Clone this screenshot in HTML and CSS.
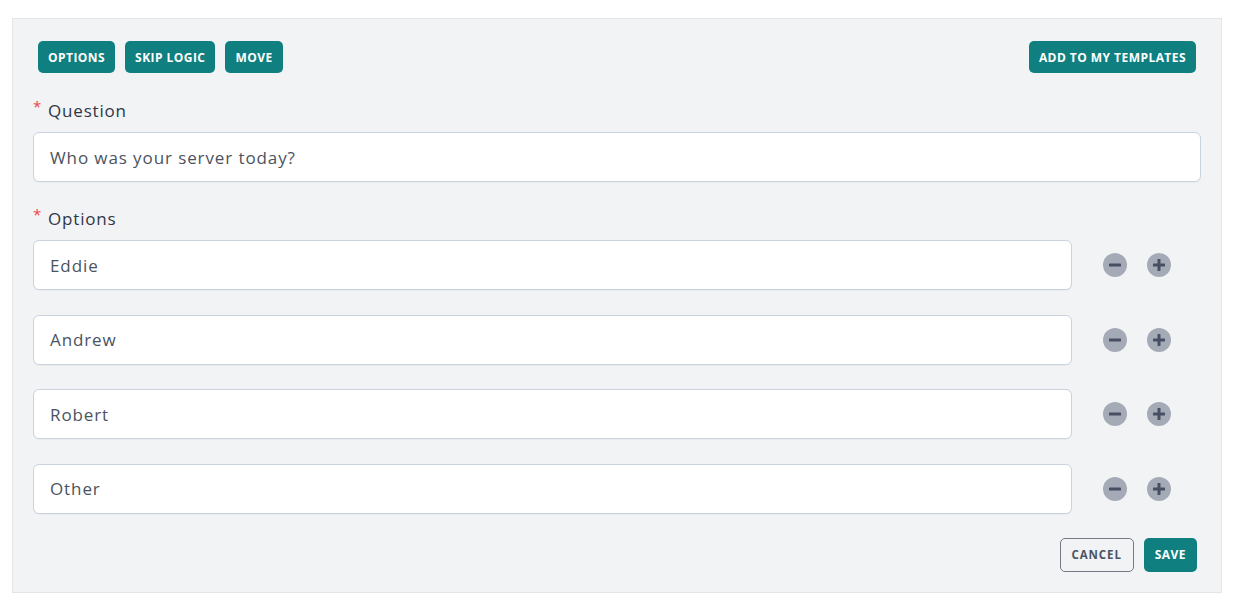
FILE: index.html
```html
<!DOCTYPE html>
<html>
<head>
<meta charset="utf-8">
<link rel="stylesheet" href="styles.css">
</head>
<body>
<div class="panel">
  <div class="toolbar">
    <div class="toolbar-left">
      <button class="btn btn-teal">OPTIONS</button>
      <button class="btn btn-teal">SKIP LOGIC</button>
      <button class="btn btn-teal">MOVE</button>
    </div>
    <button class="btn btn-teal">ADD TO MY TEMPLATES</button>
  </div>

  <label class="field-label label-question"><span class="req">*</span>Question</label>
  <div class="input">Who was your server today?</div>

  <label class="field-label label-options"><span class="req">*</span>Options</label>
  <div class="options">
    <div class="option-row">
      <div class="input">Eddie</div>
      <div class="icons">
        <span class="circle"><svg viewBox="0 0 24 24" width="24" height="24"><rect x="6" y="10.5" width="12" height="3" rx="0.6"/></svg></span>
        <span class="circle"><svg viewBox="0 0 24 24" width="24" height="24"><rect x="6" y="10.5" width="12" height="3" rx="0.6"/><rect x="10.5" y="6" width="3" height="12" rx="0.6"/></svg></span>
      </div>
    </div>
    <div class="option-row">
      <div class="input">Andrew</div>
      <div class="icons">
        <span class="circle"><svg viewBox="0 0 24 24" width="24" height="24"><rect x="6" y="10.5" width="12" height="3" rx="0.6"/></svg></span>
        <span class="circle"><svg viewBox="0 0 24 24" width="24" height="24"><rect x="6" y="10.5" width="12" height="3" rx="0.6"/><rect x="10.5" y="6" width="3" height="12" rx="0.6"/></svg></span>
      </div>
    </div>
    <div class="option-row">
      <div class="input">Robert</div>
      <div class="icons">
        <span class="circle"><svg viewBox="0 0 24 24" width="24" height="24"><rect x="6" y="10.5" width="12" height="3" rx="0.6"/></svg></span>
        <span class="circle"><svg viewBox="0 0 24 24" width="24" height="24"><rect x="6" y="10.5" width="12" height="3" rx="0.6"/><rect x="10.5" y="6" width="3" height="12" rx="0.6"/></svg></span>
      </div>
    </div>
    <div class="option-row">
      <div class="input">Other</div>
      <div class="icons">
        <span class="circle"><svg viewBox="0 0 24 24" width="24" height="24"><rect x="6" y="10.5" width="12" height="3" rx="0.6"/></svg></span>
        <span class="circle"><svg viewBox="0 0 24 24" width="24" height="24"><rect x="6" y="10.5" width="12" height="3" rx="0.6"/><rect x="10.5" y="6" width="3" height="12" rx="0.6"/></svg></span>
      </div>
    </div>
  </div>

  <div class="footer">
    <button class="btn btn-outline">CANCEL</button>
    <button class="btn btn-teal btn-save">SAVE</button>
  </div>
</div>
</body>
</html>
```

FILE: styles.css
```css
* { box-sizing: border-box; }

body {
  margin: 0;
  padding: 18px 14px 0 12px;
  background: #ffffff;
  font-family: "Open Sans", "Liberation Sans", sans-serif;
}

.panel {
  background: #f2f3f5;
  border: 1px solid #e3e5e8;
  padding: 22px 20px 20px 20px;
}

.toolbar {
  display: flex;
  justify-content: space-between;
  align-items: flex-start;
  padding: 0 5px;
}

.toolbar-left {
  display: flex;
  gap: 10px;
}

.btn {
  font-family: "Open Sans", "Liberation Sans", sans-serif;
  font-weight: 700;
  font-size: 12px;
  letter-spacing: 0.45px;
  border-radius: 5px;
  padding: 0 10px;
  height: 32px;
  cursor: pointer;
}

.btn-teal {
  background: #0f7f80;
  color: #ffffff;
  border: none;
}

.btn-outline {
  background: transparent;
  border: 1px solid #737a86;
  color: #4b5563;
  height: 34px;
  padding: 0 11px;
  font-size: 11.5px;
  letter-spacing: 0.9px;
}

.btn-save {
  height: 34px;
  padding: 0 11px;
}

.field-label {
  display: flex;
  align-items: flex-start;
  font-size: 17px;
  line-height: 24px;
  color: #2f3747;
  margin-bottom: 9px;
  letter-spacing: 0.8px;
}

.label-question { margin-top: 26px; }
.label-options { margin-top: 25px; }

.req {
  color: #ef4444;
  font-size: 15px;
  line-height: 14px;
  margin: 0 6px 0 0;
}

.input {
  height: 50px;
  background: #ffffff;
  border: 1px solid #c9d2df;
  border-radius: 6px;
  padding: 0 16px;
  display: flex;
  align-items: center;
  font-size: 17px;
  letter-spacing: 0.9px;
  color: #4a5361;
  box-shadow: 0 1px 1px rgba(0, 0, 0, 0.03);
}

.options {
  display: flex;
  flex-direction: column;
  gap: 24.67px;
}

.option-row {
  display: flex;
  align-items: center;
}

.option-row .input {
  flex: 1;
}

.icons {
  width: 129px;
  display: flex;
  justify-content: center;
  gap: 20px;
}

.circle {
  width: 24px;
  height: 24px;
  border-radius: 50%;
  background: #a5abb6;
  display: flex;
}

.circle svg { fill: #465062; }

.footer {
  display: flex;
  justify-content: flex-end;
  gap: 10px;
  margin-top: 24px;
  padding-right: 4px;
}
```
